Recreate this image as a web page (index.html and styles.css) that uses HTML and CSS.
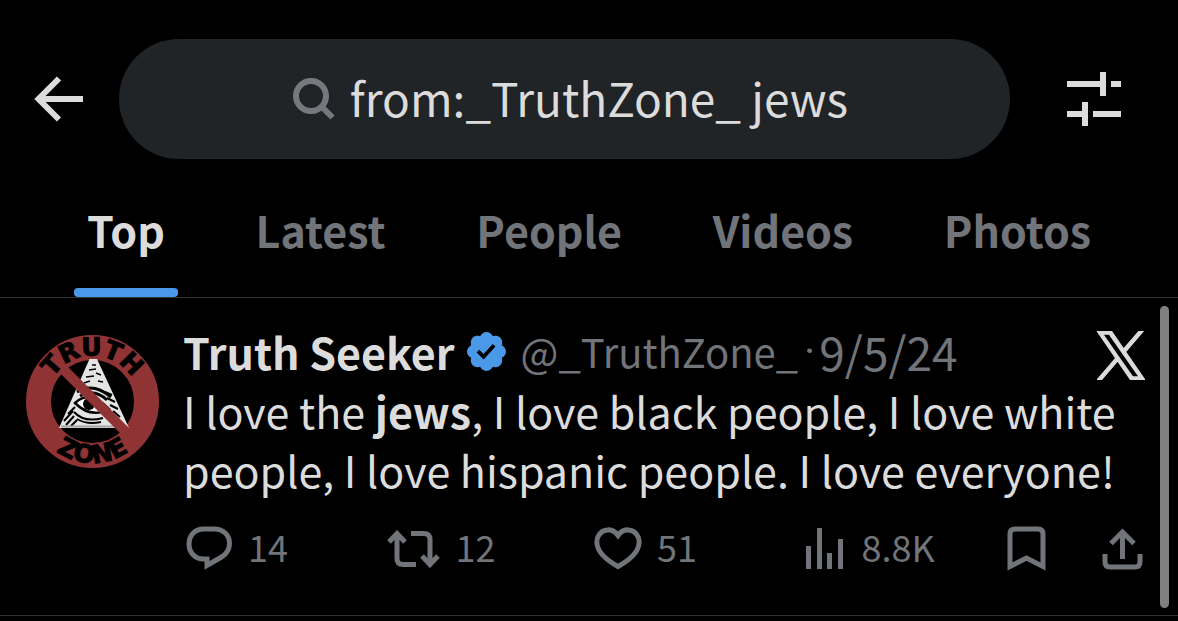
FILE: index.html
```
<!DOCTYPE html>
<html lang="en">
<head>
  <meta charset="UTF-8">
  <meta name="viewport" content="width=device-width, initial-scale=1">
  <title>from:_TruthZone_ jews - Search</title>
  <link rel="stylesheet" href="styles.css">
</head>
<body>
  <header class="topbar">
    <button class="icon-btn" type="button" aria-label="Back">
      <svg width="50" height="46" viewBox="0 0 50 46" fill="none" stroke="currentColor" stroke-width="6">
        <path d="M49 23H6M25 2.500L4.500 23 25 43.500"/>
      </svg>
    </button>
    <label class="search">
      <svg class="search-icon" width="42" height="42" viewBox="0 0 42 42" fill="none" stroke="currentColor" stroke-width="6">
        <circle cx="18" cy="18" r="15"/>
        <path d="M28.500 28.500L39.500 39.500"/>
      </svg>
      <input class="search-input" type="text" size="20" value="from:_TruthZone_ jews" aria-label="Search">
    </label>
    <button class="icon-btn" type="button" aria-label="Search filters">
      <svg width="54" height="54" viewBox="0 0 54 54" fill="currentColor">
        <path d="M0 9h33V0h6v24h-6v-9H0zM44 9h10v6H44zM0 39h15v-9h6v24h-6v-9H0zM26 39h28v6H26z"/>
      </svg>
    </button>
  </header>

  <nav class="tabs">
    <a class="tab active" href="#top">Top</a>
    <a class="tab" href="#latest">Latest</a>
    <a class="tab" href="#people">People</a>
    <a class="tab" href="#videos">Videos</a>
    <a class="tab" href="#photos">Photos</a>
  </nav>

  <main class="results">
    <article class="tweet">
      <a class="avatar" href="#profile" aria-label="Truth Seeker">
        <svg width="133" height="133" viewBox="0 0 133 133">
          <defs>
            <path id="arc-top" d="M20.500 66.500a46 46 0 0 1 92 0"/>
            <path id="arc-bottom" d="M5 66.500a61.500 61.500 0 0 0 123 0"/>
          </defs>
          <circle cx="66.500" cy="66.500" r="54" fill="#000" stroke="#8f3335" stroke-width="25"/>
          <!-- pyramid -->
          <path d="M63.500 24h7.500L103 93H33z" fill="#e4e4e4"/>
          <path d="M66 30h4M63 35l7-1M70 38l5 2M60 42l8-1M58 48l6-2M72 46l5 1M57 52h5" stroke="#000" stroke-width="1.500"/>
          <path d="M51 57q16-10 34 5M54 61q14-8 27 4" fill="none" stroke="#000" stroke-width="3"/>
          <path d="M49 68q15-14 34 6-18 10-34-6z" fill="#fff" stroke="#000" stroke-width="2.500"/>
          <circle cx="63" cy="69" r="6" fill="#000"/>
          <path d="M42 79l7-7M38 86l9-10M40 90l8-9M45 91l6-6M48 77q10 11 29 6M51 84q10 6 24 3M79 57l7 3M81 63l8 4M84 70l8 4M87 76l7 6M82 78l4 4" fill="none" stroke="#000" stroke-width="2"/>
          <path d="M35 91.500h66" stroke="#a5a5a5" stroke-width="2"/>
          <path d="M34 31l71 71" stroke="#8f3335" stroke-width="10"/>
          <g class="avatar-text" text-anchor="middle">
            <text><textPath href="#arc-top" startOffset="50%">TRUTH</textPath></text>
            <text><textPath href="#arc-bottom" startOffset="50%">ZONE</textPath></text>
          </g>
        </svg>
      </a>

      <div class="tweet-main">
        <div class="tweet-head">
          <a class="name" href="#profile">Truth Seeker</a>
          <svg class="verified" width="39" height="39" viewBox="1.750 1.750 20.500 20.500" fill="currentColor">
            <path d="M22.250 12c0-1.430-.88-2.670-2.190-3.340.46-1.390.2-2.900-.81-3.910s-2.520-1.270-3.910-.81c-.66-1.310-1.910-2.190-3.340-2.190s-2.670.88-3.330 2.190c-1.400-.46-2.910-.2-3.920.81s-1.260 2.520-.8 3.910c-1.310.67-2.200 1.910-2.200 3.340s.89 2.670 2.200 3.340c-.46 1.390-.21 2.900.8 3.910s2.520 1.260 3.910.81c.67 1.310 1.910 2.190 3.340 2.190s2.680-.88 3.340-2.190c1.390.45 2.900.2 3.910-.81s1.270-2.520.81-3.910c1.310-.67 2.190-1.910 2.190-3.340zm-11.710 4.200L6.800 12.460l1.410-1.420 2.260 2.260 4.800-5.230 1.470 1.360-6.200 6.770z"/>
          </svg>
          <span class="handle">@_TruthZone_</span>
          <span class="dot">·</span>
          <time class="date" datetime="2024-09-05">9/5/24</time>
          <svg class="x-logo" width="48" height="49" viewBox="0 0 1200 1227" fill="currentColor" stroke="currentColor" stroke-width="30">
            <path d="M714.163 519.284L1160.890 0H1055.030L667.137 450.887L357.328 0H0L468.492 681.821L0 1226.370H105.866L515.491 750.218L842.672 1226.370H1200L714.137 519.284ZM569.165 687.828L521.697 619.934L144.011 79.694H306.615L611.412 515.685L658.880 583.579L1055.080 1150.300H892.476L569.165 687.854Z"/>
          </svg>
        </div>

        <p class="tweet-text">I love the <b>jews</b>, I love black people, I love white people, I love hispanic people. I love everyone!</p>

        <div class="actions">
          <button class="action" type="button" aria-label="Reply, 14">
            <svg width="47" height="45" viewBox="0 0 47 45" fill="none" stroke="currentColor" stroke-width="5">
              <path d="M17.500 3h11C37 3 43.500 9 43.500 17.500c0 6-3 10.500-8 13.500L21 39.500V33h-3.500C9 33 3 26.500 3 18S9 3 17.500 3z"/>
            </svg>
            <span class="count">14</span>
          </button>
          <button class="action" type="button" aria-label="Repost, 12">
            <svg width="53" height="38" viewBox="0 0 53 38" fill="none" stroke="currentColor" stroke-width="5">
              <path d="M2 12l8-8.500 8 8.500M10 4v24.500q0 6 6 6h13M24 3.500h13q6 0 6 6V34M35 26l8 8.500 8-8.500"/>
            </svg>
            <span class="count">12</span>
          </button>
          <button class="action" type="button" aria-label="Like, 51">
            <svg width="48" height="43" viewBox="0 0 48 43" fill="none" stroke="currentColor" stroke-width="5">
              <path d="M24 8.500C20.500 3.500 16.500 2.500 13.500 3 6.500 3.500 2 9.500 3 17c1 8 8.500 15.500 21 22.500C36.500 32.500 44 25 45 17c1-7.500-3.500-13.500-10.500-14-3-.5-7 .5-10.500 5.500z"/>
            </svg>
            <span class="count">51</span>
          </button>
          <button class="action" type="button" aria-label="Views, 8.8K">
            <svg class="views" width="37" height="41" viewBox="0 0 37 41" fill="currentColor">
              <path d="M0 18h5v23H0zM11 0h5v41h-5zM21 25h5v16h-5zM32 11h5v30h-5z"/>
            </svg>
            <span class="count">8.8K</span>
          </button>
          <button class="action" type="button" aria-label="Bookmark">
            <svg width="39" height="45" viewBox="0 0 39 45" fill="none" stroke="currentColor" stroke-width="5">
              <path d="M8 3h23q5 0 5 5v32.500L19.500 32 3 40.500V8q0-5 5-5z"/>
            </svg>
          </button>
          <button class="action" type="button" aria-label="Share">
            <svg width="41" height="42" viewBox="0 0 41 42" fill="none" stroke="currentColor" stroke-width="5">
              <path d="M20.500 31V4M9 15.500L20.500 4 32 15.500M3 26v8q0 5 5 5h25q5 0 5-5v-8"/>
            </svg>
          </button>
        </div>
      </div>
    </article>
    <div class="scroll-thumb"></div>
  </main>
</body>
</html>
```
FILE: styles.css
```
* { box-sizing: border-box; }

body {
  margin: 0;
  background: #000;
  color: #dcdcdc;
  font-family: "Noto Sans CJK SC", "Noto Sans", sans-serif;
  font-size: 43px;
}

a { color: inherit; text-decoration: none; }
button {
  padding: 0; border: none; background: none;
  color: inherit; font: inherit; cursor: pointer;
}
svg { display: block; flex-shrink: 0; }

/* search bar */
.topbar {
  display: flex; align-items: center;
  padding: 39px 57px 0 34px;
}
.search {
  flex: 1; display: flex; align-items: center; justify-content: center;
  gap: 15px; height: 120px; margin: 0 57px 0 35px; padding-left: 12px;
  border-radius: 60px; background: #212427;
}
.search-icon { color: #75787d; }
.search-input {
  field-sizing: content; min-width: 0; padding: 0 0 4px;
  border: none; outline: none; background: none;
  color: inherit; font-family: inherit; font-size: 46px; line-height: 76px;
}

/* tabs */
.tabs {
  display: flex; justify-content: space-between;
  padding: 0 74px; border-bottom: 1px solid #303133;
}
.tab {
  position: relative; padding: 40px 13px 37px;
  color: #717479; font-weight: bold; line-height: 61px;
}
.tab.active { color: #dcdcdc; }
.tab.active::after {
  content: ""; position: absolute; left: 0; right: 0; bottom: 0;
  height: 9px; border-radius: 4px; background: #4a99e9;
}

/* tweet */
.results { position: relative; }
.tweet {
  display: flex; gap: 24px;
  padding: 24px 33px 44px 26px; border-bottom: 1px solid #303133;
}
.avatar { flex-shrink: 0; padding-top: 13px; }
.avatar svg { overflow: visible; }
.avatar-text {
  font-family: "DejaVu Sans", sans-serif; font-size: 25px; font-weight: bold;
  stroke: #000; stroke-width: 1px;
}
.tweet-main { flex: 1; min-width: 0; }
.tweet-head { display: flex; align-items: center; line-height: 59px; }
.name { font-weight: bold; }
.verified { margin: 0 15px 0 12px; color: #4a99e9; }
.handle, .dot, .date { color: #717479; }
.handle { font-size: 40px; }
.dot { margin: 0 4px 0 6px; font-family: Roboto, sans-serif; }
.date { font-size: 46px; }
.x-logo { margin: 8px 0 0 auto; }
.tweet-text { margin: 0; line-height: 59px; }

.actions {
  display: grid; grid-template-columns: 40fr 41fr 42fr 40fr 95px 41px;
  align-items: center; margin-top: 27px; padding: 0 2px 0 3px;
  color: #717479; font-size: 36px; line-height: 41px;
}
.action { display: flex; align-items: center; gap: 15px; }
.count { padding-bottom: 4px; }
.views { margin-right: 4px; }

.scroll-thumb {
  position: absolute; top: 8px; right: 9px; bottom: 8px;
  width: 9px; border-radius: 5px; background: #808080;
}
```
